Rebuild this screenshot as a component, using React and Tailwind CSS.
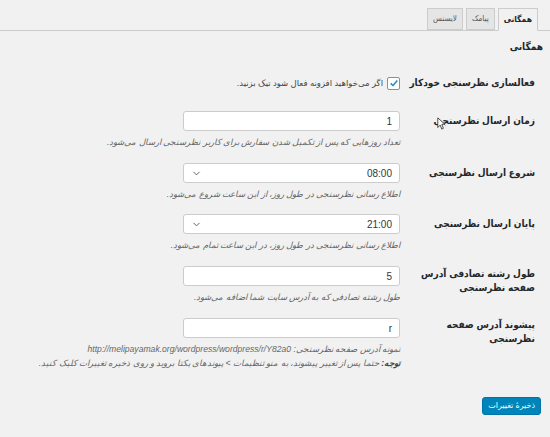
import { ChevronDown } from "lucide-react";

const fa = { fontFamily: '"Liberation Sans", "DejaVu Sans", Tahoma, sans-serif' };
const faTight = { fontFamily: '"Liberation Sans", "DejaVu Sans Condensed", "DejaVu Sans", sans-serif' };

function Tab({ label, active }) {
  return (
    <div
      style={faTight}
      className={
        active
          ? "h-[23px] px-[5px] -mb-px border border-[#ccc] border-b-[#f1f1f1] bg-[#f1f1f1] text-[8.5px] font-bold text-[#23282d] flex items-center"
          : "h-[22px] px-[5px] border border-[#ccc] bg-[#e5e5e5] text-[8px] text-[#555] flex items-center"
      }
    >
      {label}
    </div>
  );
}

function Field({ children }) {
  return (
    <div className="w-[217px] h-[20px] bg-white border border-[#ccc] rounded-[3px] flex items-center justify-between px-[7px] text-[10px] text-[#32373c]">
      {children}
    </div>
  );
}

function Row({ label, children, className = "", top = "pt-[3px]" }) {
  return (
    <div className={"flex items-start pr-[15px] " + className}>
      <div
        style={faTight}
        className={"w-[135px] shrink-0 text-[10px] font-bold leading-[14px] text-[#23282d] whitespace-nowrap " + top}
      >
        {label}
      </div>
      <div className="flex flex-col items-start">{children}</div>
    </div>
  );
}

function Hint({ children }) {
  return (
    <p className="mt-[4px] text-[8.6px] italic leading-[14px] text-[#666] whitespace-nowrap">
      {children}
    </p>
  );
}

export default function App() {
  return (
    <div dir="rtl" style={fa} className="relative w-[550px] h-[437px] bg-[#f1f1f1] overflow-hidden">
      <div className="flex items-end gap-[3px] pr-[12px] pt-[8px] border-b border-[#ccc]">
        <Tab label="همگانی" active />
        <Tab label="پیامک" />
        <Tab label="لایسنس" />
      </div>

      <h2 style={faTight} className="mt-[9px] pr-[7px] text-[10px] leading-[14px] font-bold text-[#23282d]">
        همگانی
      </h2>

      <Row label="فعالسازی نظرسنجی خودکار" className="mt-[22px]" top="pt-0">
        <label className="flex items-center gap-[4px] text-[8.5px] leading-[14px] text-[#444]">
          <span className="w-[13px] h-[13px] bg-white border border-[#8c8f94] rounded-[2px] flex items-center justify-center">
            <svg viewBox="0 0 12 12" className="w-[10px] h-[10px]">
              <path d="M2 6.5 L4.8 9 L10 3" fill="none" stroke="#1e8cbe" strokeWidth="1.8" />
            </svg>
          </span>
          اگر می‌خواهید افزونه فعال شود تیک بزنید.
        </label>
      </Row>

      <Row label="زمان ارسال نظرسنجی" className="mt-[21px]">
        <Field>
          <span>1</span>
        </Field>
        <Hint>تعداد روزهایی که پس از تکمیل شدن سفارش برای کاربر نظرسنجی ارسال می‌شود.</Hint>
      </Row>

      <Row label="شروع ارسال نظرسنجی" className="mt-[14px]">
        <Field>
          <span>08:00</span>
          <ChevronDown className="w-[11px] h-[11px] text-[#555]" strokeWidth={2} />
        </Field>
        <Hint>اطلاع رسانی نظرسنجی در طول روز، از این ساعت شروع می‌شود.</Hint>
      </Row>

      <Row label="پایان ارسال نظرسنجی" className="mt-[13px]">
        <Field>
          <span>21:00</span>
          <ChevronDown className="w-[11px] h-[11px] text-[#555]" strokeWidth={2} />
        </Field>
        <Hint>اطلاع رسانی نظرسنجی در طول روز، در این ساعت تمام می‌شود.</Hint>
      </Row>

      <Row
        label={
          <>
            طول رشته تصادفی آدرس
            <br />
            صفحه نظرسنجی
          </>
        }
        className="mt-[14px]"
        top="pt-px"
      >
        <Field>
          <span>5</span>
        </Field>
        <Hint>طول رشته تصادفی که به آدرس سایت شما اضافه می‌شود.</Hint>
      </Row>

      <Row
        label={
          <>
            پیشوند آدرس صفحه
            <br />
            نظرسنجی
          </>
        }
        className="mt-[14px]"
        top="pt-0"
      >
        <Field>
          <span>r</span>
        </Field>
        <Hint>
          نمونه آدرس صفحه نظرسنجی: http://melipayamak.org/wordpress/wordpress/r/Y82a0
          <br />
          <b className="font-bold text-[#444]">توجه:</b> حتما پس از تغییر پیشوند، به منو تنظیمات &gt; پیوندهای یکتا بروید و روی ذخیره تغییرات کلیک کنید.
        </Hint>
      </Row>

      <div className="pr-[9px] mt-[21px]">
        <button className="h-[18px] px-[5px] rounded-[3px] bg-[#0085ba] border border-[#0073aa] text-white text-[8px] leading-none">
          ذخیرهٔ تغییرات
        </button>
      </div>

      {/* mouse pointer */}
      <svg viewBox="0 0 10 16" className="absolute left-[437px] top-[117px] w-[8px] h-[13px]">
        <path d="M1 1 L1 13 L4 10 L6 15 L8 14 L6 9 L10 9 Z" fill="white" stroke="#222" strokeWidth="1" />
      </svg>
    </div>
  );
}
